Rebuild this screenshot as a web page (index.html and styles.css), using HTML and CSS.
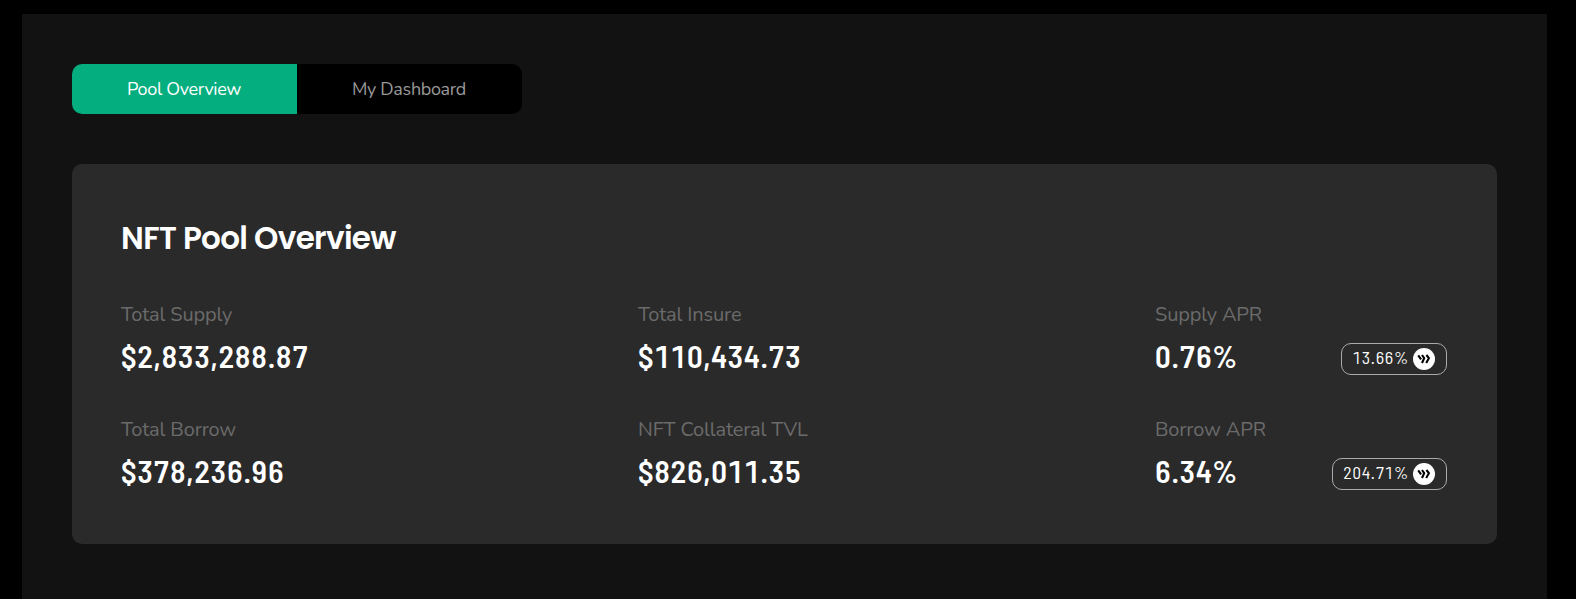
FILE: index.html
```html
<!DOCTYPE html>
<html lang="en">
<head>
    <meta charset="UTF-8">
    <meta name="viewport" content="width=device-width, initial-scale=1.0">
    <title>NFT Pool Overview</title>
    <link rel="stylesheet" href="styles.css">
</head>
<body>
    <svg class="sprite" width="0" height="0">
        <symbol id="reward" viewBox="0 0 22 22">
            <circle cx="11" cy="11" r="11" fill="#fff"/>
            <g fill="none" stroke="#000" stroke-width="2.1">
                <path d="M5.2 7.4 8.1 11.4"/>
                <path d="M9 7 11.2 10.2 9 15"/>
                <path d="M13.4 7 15.9 10.2 13.2 15"/>
            </g>
        </symbol>
    </svg>
    <main class="container">
        <div class="tabs">
            <button class="tab tab-active">Pool Overview</button>
            <button class="tab">My Dashboard</button>
        </div>
        <section class="card">
            <h1>NFT Pool Overview</h1>
            <div class="stats">
                <div class="stat">
                    <div class="label">Total Supply</div>
                    <div class="value">$2,833,288.87</div>
                </div>
                <div class="stat">
                    <div class="label">Total Insure</div>
                    <div class="value">$110,434.73</div>
                </div>
                <div class="stat">
                    <div class="label">Supply APR</div>
                    <div class="row">
                        <div class="value">0.76%</div>
                        <div class="badge"><span>13.66%</span><svg class="icon"><use href="#reward"/></svg></div>
                    </div>
                </div>
                <div class="stat">
                    <div class="label">Total Borrow</div>
                    <div class="value">$378,236.96</div>
                </div>
                <div class="stat">
                    <div class="label">NFT Collateral TVL</div>
                    <div class="value">$826,011.35</div>
                </div>
                <div class="stat">
                    <div class="label">Borrow APR</div>
                    <div class="row">
                        <div class="value">6.34%</div>
                        <div class="badge"><span>204.71%</span><svg class="icon"><use href="#reward"/></svg></div>
                    </div>
                </div>
            </div>
        </section>
    </main>
</body>
</html>
```
FILE: styles.css
```css
* {
    box-sizing: border-box;
}
body {
    margin: 0;
    padding: 14px 29px 0 22px;
    height: 100vh;
    overflow: hidden;
    background: #000;
    color: #fff;
    font-family: Nunito, Lato, sans-serif;
}
.sprite {
    display: none;
}
.container {
    height: 100%;
    padding: 50px;
    background: #121212;
}
.tabs {
    display: flex;
    width: 450px;
    height: 50px;
    margin-bottom: 50px;
    border-radius: 10px;
    background: #000;
    overflow: hidden;
}
.tab {
    flex: 1;
    padding: 0 1px 0 0;
    border: none;
    background: none;
    color: #999;
    font: inherit;
    font-size: 18px;
    letter-spacing: -0.33px;
    cursor: pointer;
}
.tab-active {
    background: #04ae7e;
    color: #fff;
}
.card {
    height: 380px;
    padding: 49px 50px 50px 49px;
    border-radius: 10px;
    background: #2a2a2a;
}
h1 {
    margin: 0 0 33px;
    font-family: Poppins, Nunito, Lato, sans-serif;
    font-size: 31px;
    font-weight: 600;
    line-height: 50px;
    letter-spacing: -0.65px;
}
.stats {
    display: grid;
    grid-template-columns: repeat(3, 292px);
    justify-content: space-between;
    row-gap: 35px;
}
.stat {
    height: 80px;
}
.label {
    color: #6b6b6b;
    font-size: 20px;
    line-height: 38px;
    letter-spacing: -0.15px;
}
.value {
    font-family: DIN, "Barlow Semi Condensed", Barlow, Roboto, sans-serif;
    font-size: 31px;
    font-weight: 600;
    font-variant-numeric: tabular-nums;
    line-height: 44px;
    letter-spacing: 0.67px;
}
.row {
    display: flex;
    justify-content: space-between;
}
.badge {
    display: flex;
    align-items: center;
    gap: 4px;
    height: 32px;
    margin-top: 9px;
    padding: 0 11px 0 10px;
    border: 1px solid #aaa;
    border-radius: 10px;
    font-family: DIN, "Barlow Semi Condensed", Barlow, Roboto, sans-serif;
    font-size: 17.5px;
    font-variant-numeric: tabular-nums;
    letter-spacing: 0.75px;
}
.badge span {
    margin-top: -4px;
}
.icon {
    width: 22px;
    height: 22px;
}
```
